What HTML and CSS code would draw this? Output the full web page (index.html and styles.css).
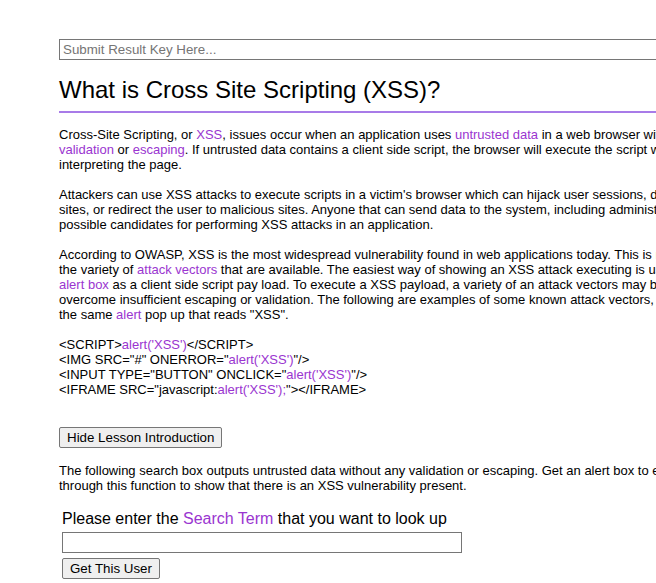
FILE: index.html
```html
<!DOCTYPE html>
<html lang="en">
<head>
<meta charset="utf-8">
<title>What is Cross Site Scripting (XSS)?</title>
<link rel="stylesheet" href="styles.css">
</head>
<body>
<div class="page">
  <form class="key-form">
    <input class="result-key" type="text" placeholder="Submit Result Key Here...">
  </form>
  <h2 class="title">What is Cross Site Scripting (XSS)?</h2>
  <div class="intro">
    <p>Cross-Site Scripting, or <a class="term" href="#">XSS</a>, issues occur when an application uses <a class="term" href="#">untrusted data</a> in a web browser without sufficient <a class="term" href="#">validation</a> or <a class="term" href="#">escaping</a>. If untrusted data contains a client side script, the browser will execute the script while it is interpreting the page.</p>
    <p>Attackers can use XSS attacks to execute scripts in a victim's browser which can hijack user sessions, deface web sites, or redirect the user to malicious sites. Anyone that can send data to the system, including administrators, are possible candidates for performing XSS attacks in an application.</p>
    <p>According to OWASP, XSS is the most widespread vulnerability found in web applications today. This is mainly due to the variety of <a class="term" href="#">attack vectors</a> that are available. The easiest way of showing an XSS attack executing is using a simple <a class="term" href="#">alert box</a> as a client side script pay load. To execute a XSS payload, a variety of an attack vectors may be necessary to overcome insufficient escaping or validation. The following are examples of some known attack vectors, that all create the same <a class="term" href="#">alert</a> pop up that reads "XSS".</p>
    <div class="vectors">
      <div class="vector">&lt;SCRIPT&gt;<span class="term">alert('XSS')</span>&lt;/SCRIPT&gt;</div>
      <div class="vector">&lt;IMG SRC="#" ONERROR="<span class="term">alert('XSS')</span>"/&gt;</div>
      <div class="vector">&lt;INPUT TYPE="BUTTON" ONCLICK="<span class="term">alert('XSS')</span>"/&gt;</div>
      <div class="vector">&lt;IFRAME SRC="javascript:<span class="term">alert('XSS');</span>"&gt;&lt;/IFRAME&gt;</div>
    </div>
  </div>
  <button class="btn toggle" type="button">Hide Lesson Introduction</button>
  <p class="task">The following search box outputs untrusted data without any validation or escaping. Get an alert box to execute through this function to show that there is an XSS vulnerability present.</p>
  <form class="search-form">
    <table class="search-table">
      <tr><td class="prompt">Please enter the <a class="term" href="#">Search Term</a> that you want to look up</td></tr>
      <tr><td><input class="search-input" type="text"></td></tr>
      <tr><td><button class="btn" type="button">Get This User</button></td></tr>
    </table>
  </form>
</div>
</body>
</html>
```
FILE: styles.css
```css
html, body {
  margin: 0;
  padding: 0;
  overflow: hidden;
  background: #ffffff;
}
body {
  font-family: "Liberation Sans", Arial, sans-serif;
  font-size: 13px;
  line-height: 15px;
  color: #000000;
}
.page {
  width: 686px;
  padding: 39px 0 0 59px;
}
.key-form {
  margin: 0;
}
.result-key {
  display: block;
  box-sizing: border-box;
  width: 100%;
  height: 21px;
  margin: 0;
  padding: 1px 3px;
  border: 1px solid #767676;
  border-radius: 0;
  font-family: "Liberation Sans", Arial, sans-serif;
  font-size: 13.333px;
  color: #000;
}
.result-key::placeholder {
  color: #757575;
}
.title {
  margin: 16px 0 14px;
  padding: 0 0 7px;
  font-size: 24px;
  line-height: 28px;
  font-weight: normal;
  border-bottom: 2px solid #a87be8;
}
.intro p {
  margin: 0 0 15px;
}
.term {
  color: #9a35d0;
  text-decoration: none;
}
.vectors {
  margin: 0 0 30px;
}
.btn {
  font-family: "Liberation Sans", Arial, sans-serif;
  font-size: 13.333px;
  line-height: 15px;
  color: #000;
  background: #efefef;
  border: 1px solid #767676;
  border-radius: 2px;
  padding: 2px 7px;
  margin: 0;
}
.toggle {
  display: block;
}
.task {
  margin: 15px 0 14px;
}
.search-form {
  margin: 0;
}
.search-table {
  border-spacing: 2px;
}
.search-table td {
  padding: 1px;
}
.prompt {
  font-size: 16px;
  line-height: 18px;
}
.search-input {
  display: block;
  box-sizing: border-box;
  width: 400px;
  height: 21px;
  margin: 0 0 1px;
  padding: 1px 2px;
  border: 1px solid #767676;
  font-family: "Liberation Sans", Arial, sans-serif;
  font-size: 13.333px;
}
```
